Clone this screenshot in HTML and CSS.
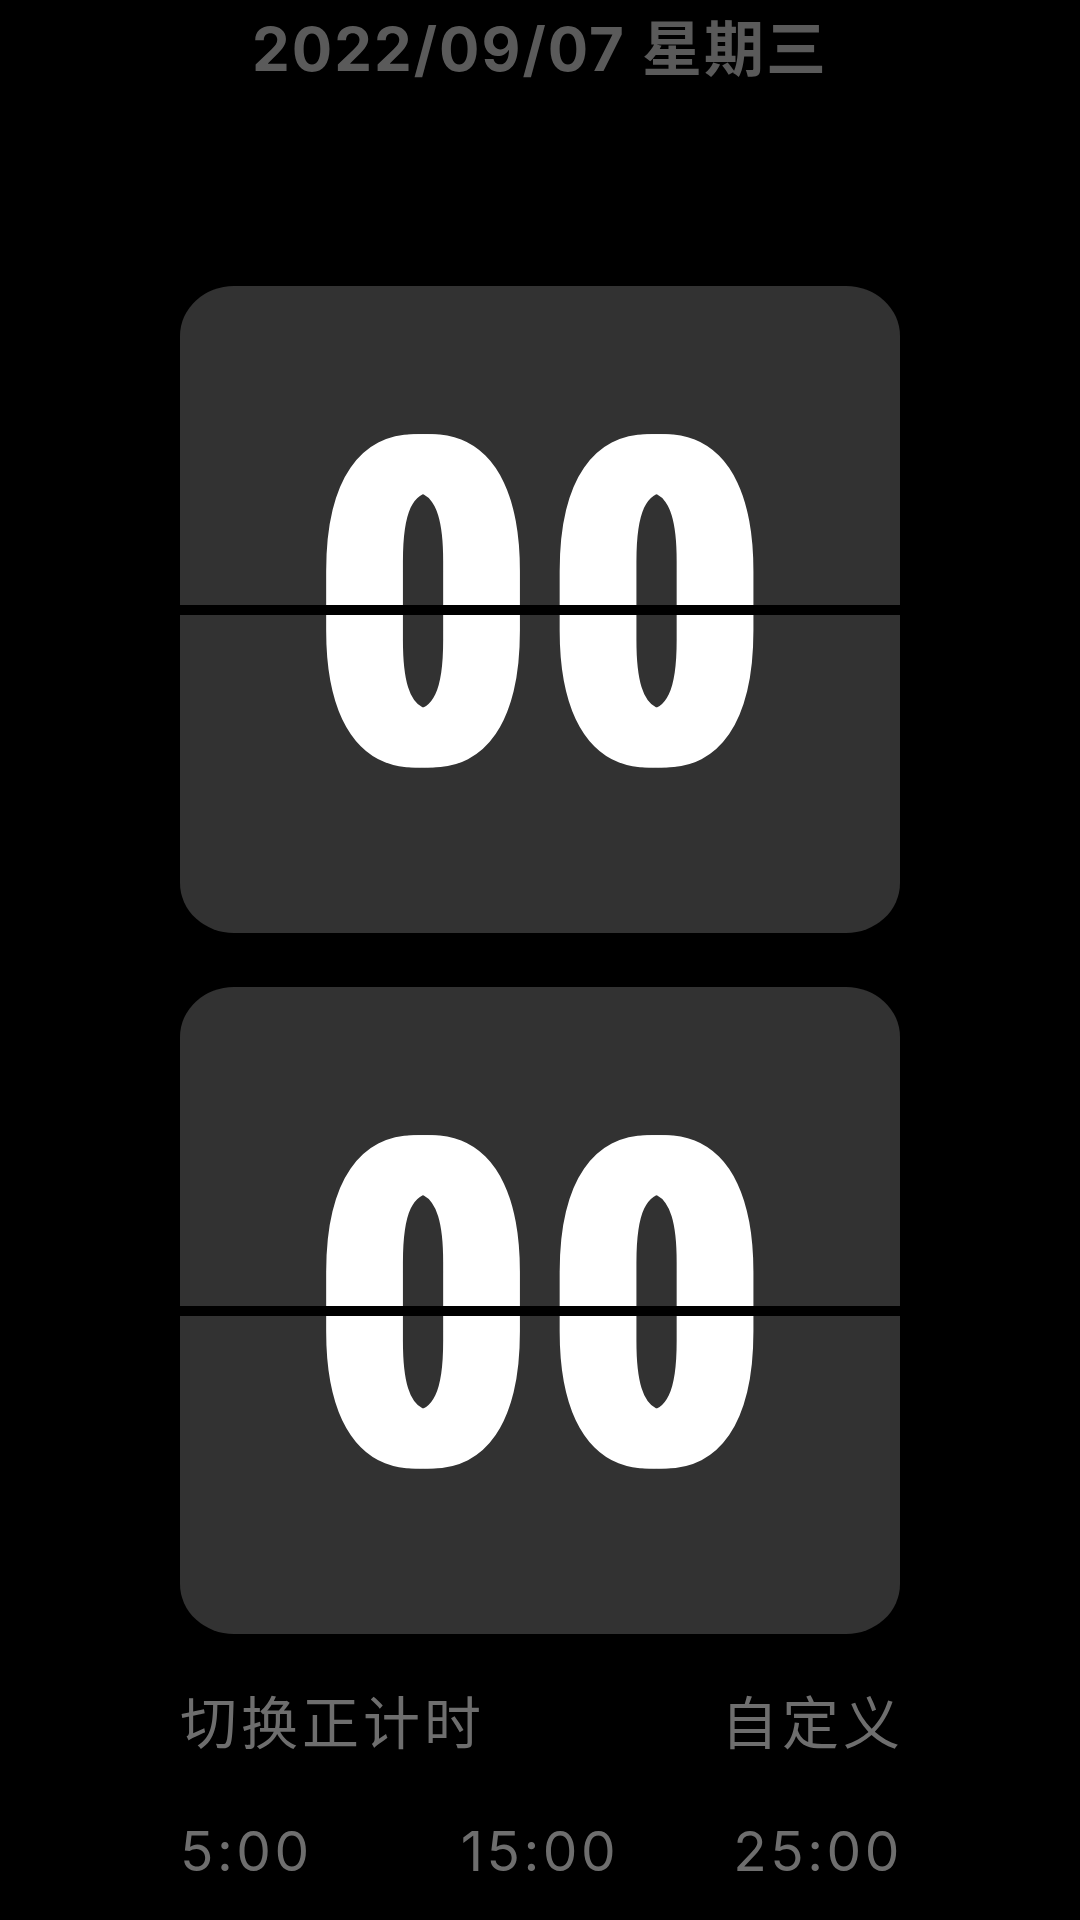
FILE: index.html
```html
<!DOCTYPE html>
<html lang="zh-CN">
<head>
    <meta charset="UTF-8">
    <meta name="viewport" content="width=device-width, initial-scale=1.0">
    <title>翻页时钟</title>
    <link rel="stylesheet" href="styles.css">
</head>
<body>
    <div class="date">2022/09/07 星期三</div>

    <div class="clock">
        <div class="card">
            <div class="digits">00</div>
            <div class="split"></div>
        </div>
        <div class="card">
            <div class="digits">00</div>
            <div class="split"></div>
        </div>
    </div>

    <div class="actions">
        <span>切换正计时</span>
        <span class="last">自定义</span>
    </div>

    <div class="presets">
        <span class="first">5:00</span>
        <span class="middle">15:00</span>
        <span class="last">25:00</span>
    </div>
</body>
</html>
```
FILE: styles.css
```css
body {
    margin: 0;
    background: #000;
    font-family: Inter, "Noto Sans CJK SC", sans-serif;
}

.date {
    margin-top: 13px;
    height: 72px;
    line-height: 72px;
    text-align: center;
    font-size: 60px;
    font-weight: 700;
    letter-spacing: 2px;
    color: #5a5a5a;
}

.clock {
    width: 720px;
    margin: 201px auto 0;
    display: flex;
    flex-direction: column;
    gap: 54px;
}

.card {
    position: relative;
    height: 647px;
    background: #323232;
    border-radius: 54px / 50px;
    display: flex;
    align-items: center;
    justify-content: center;
    overflow: hidden;
}

.digits {
    font-family: Roboto, sans-serif;
    font-weight: 900;
    font-size: 456px;
    line-height: 1;
    color: #fff;
    letter-spacing: 37px;
    padding-left: 37px;
    padding-bottom: 6px;
    transform: scaleX(0.775);
    text-shadow: 12px 0 #fff, -12px 0 #fff, 6px 0 #fff, -6px 0 #fff;
}

/* black gap of the flip card */
.split {
    position: absolute;
    left: 0;
    right: 0;
    top: 50%;
    height: 10px;
    margin-top: -5px;
    background: #000;
}

.actions {
    width: 720px;
    margin: 57px auto 0;
    display: flex;
    justify-content: space-between;
    font-family: "Noto Sans CJK SC", sans-serif;
    font-size: 57px;
    line-height: 57px;
    letter-spacing: 4px;
    color: #6e6e6e;
}

.actions .last { margin-right: -4px; }

.presets {
    width: 720px;
    margin: 76px auto 0;
    display: grid;
    grid-template-columns: 1fr 1fr 1fr;
    font-size: 55px;
    line-height: 55px;
    letter-spacing: 3.5px;
    color: #6e6e6e;
}

.presets .first { justify-self: start; }
.presets .middle { justify-self: center; }
.presets .last { justify-self: end; margin-right: -3px; }
```
